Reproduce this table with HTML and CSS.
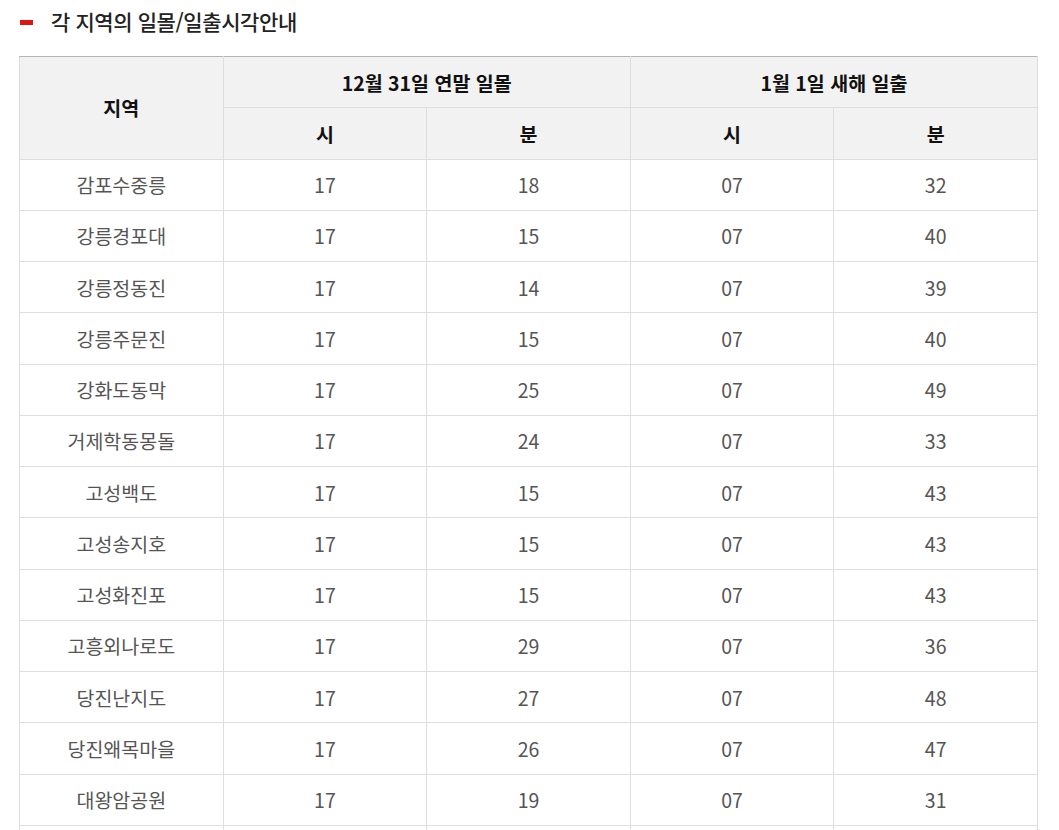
FILE: index.html
```html
<!DOCTYPE html>
<html lang="ko">
<head>
<meta charset="utf-8">
<link rel="stylesheet" href="styles.css">
</head>
<body>
<div class="page">
  <h2 class="title"><span class="bar"></span>각 지역의 일몰/일출시각안내</h2>
  <table class="sun">
    <thead>
      <tr>
        <th rowspan="2">지역</th>
        <th colspan="2">12월 31일 연말 일몰</th>
        <th colspan="2">1월 1일 새해 일출</th>
      </tr>
      <tr>
        <th>시</th><th>분</th><th>시</th><th>분</th>
      </tr>
    </thead>
    <tbody>
      <tr><td>감포수중릉</td><td>17</td><td>18</td><td>07</td><td>32</td></tr>
      <tr><td>강릉경포대</td><td>17</td><td>15</td><td>07</td><td>40</td></tr>
      <tr><td>강릉정동진</td><td>17</td><td>14</td><td>07</td><td>39</td></tr>
      <tr><td>강릉주문진</td><td>17</td><td>15</td><td>07</td><td>40</td></tr>
      <tr><td>강화도동막</td><td>17</td><td>25</td><td>07</td><td>49</td></tr>
      <tr><td>거제학동몽돌</td><td>17</td><td>24</td><td>07</td><td>33</td></tr>
      <tr><td>고성백도</td><td>17</td><td>15</td><td>07</td><td>43</td></tr>
      <tr><td>고성송지호</td><td>17</td><td>15</td><td>07</td><td>43</td></tr>
      <tr><td>고성화진포</td><td>17</td><td>15</td><td>07</td><td>43</td></tr>
      <tr><td>고흥외나로도</td><td>17</td><td>29</td><td>07</td><td>36</td></tr>
      <tr><td>당진난지도</td><td>17</td><td>27</td><td>07</td><td>48</td></tr>
      <tr><td>당진왜목마을</td><td>17</td><td>26</td><td>07</td><td>47</td></tr>
      <tr><td>대왕암공원</td><td>17</td><td>19</td><td>07</td><td>31</td></tr>
      <tr><td>대천해수욕장</td><td>17</td><td>26</td><td>07</td><td>45</td></tr>
    </tbody>
  </table>
</div>
</body>
</html>
```
FILE: styles.css
```css
html, body {
  margin: 0;
  padding: 0;
  background: #fff;
}
body {
  font-family: "Noto Sans CJK KR", "Noto Sans", sans-serif;
}
.page {
  padding: 0 21px 0 19px;
}
.title {
  display: flex;
  align-items: center;
  margin: 0;
  height: 56px;
  padding-bottom: 14px;
  box-sizing: border-box;
  font-size: 21px;
  font-weight: 500;
  letter-spacing: -0.4px;
  color: #222;
}
.bar {
  display: inline-block;
  width: 13px;
  height: 5px;
  background: #e2140f;
  margin: 3px 18px 0 1px;
}
.sun {
  width: 100%;
  border-collapse: collapse;
  table-layout: fixed;
  border-top: 1px solid #b5b5b5;
}
.sun th, .sun td {
  border: 1px solid #dedede;
  text-align: center;
  padding: 0;
  height: 50.25px;
  font-size: 19.5px;
}
.sun thead tr:first-child th {
  border-top: 1px solid #b5b5b5;
}
.sun th {
  background: #f2f2f2;
  color: #111;
  font-weight: 700;
}
.sun td {
  color: #555;
  font-weight: 400;
}
```
